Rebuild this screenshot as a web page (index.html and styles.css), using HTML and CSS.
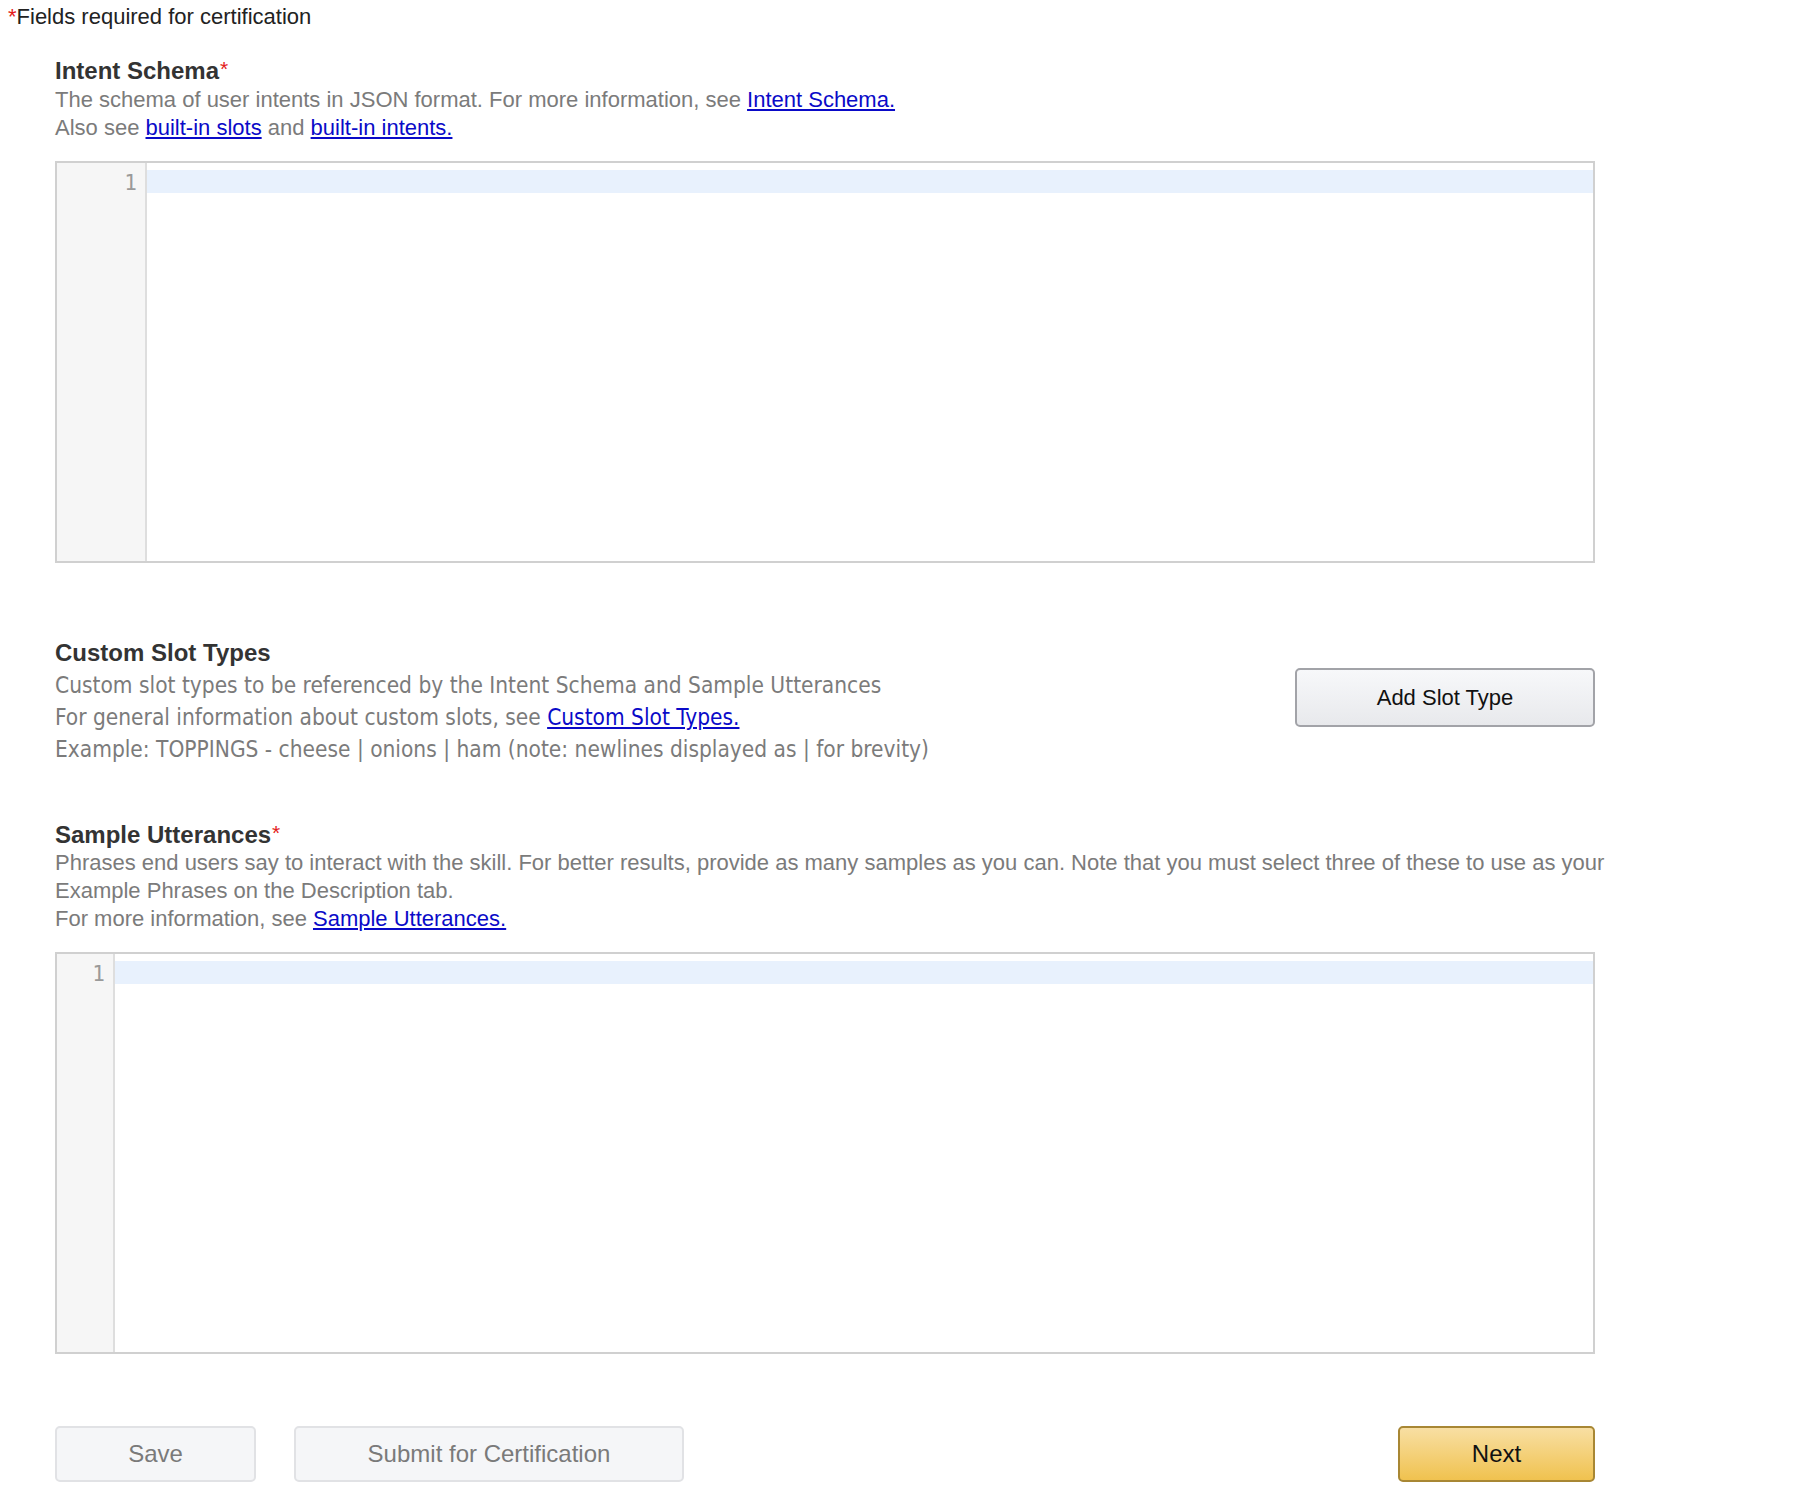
FILE: index.html
```html
<!DOCTYPE html>
<html lang="en">
<head>
<meta charset="utf-8">
<title>Interaction Model</title>
<link rel="stylesheet" href="styles.css">
</head>
<body>
<div class="page">
  <p class="required-note"><span class="req">*</span>Fields required for certification</p>
  <div class="form">
    <section class="field field-intent">
      <h2 class="field-title">Intent Schema<span class="req">*</span></h2>
      <p class="field-desc">The schema of user intents in JSON format. For more information, see <a href="#">Intent Schema.</a><br>Also see <a href="#">built-in slots</a> and <a href="#">built-in intents.</a></p>
      <div class="editor">
        <div class="gutter gutter-wide"><div class="line-no">1</div></div>
        <div class="code"><div class="active-line"></div></div>
      </div>
    </section>

    <section class="field field-slots">
      <h2 class="field-title">Custom Slot Types</h2>
      <div class="slots-row">
        <div class="slots-desc">
          <p class="slots-line">Custom slot types to be referenced by the Intent Schema and Sample Utterances</p>
          <p class="slots-line">For general information about custom slots, see <a href="#">Custom Slot Types.</a></p>
          <p class="slots-line">Example: TOPPINGS - cheese | onions | ham (note: newlines displayed as | for brevity)</p>
        </div>
        <button class="btn btn-add" type="button">Add Slot Type</button>
      </div>
    </section>

    <section class="field field-utterances">
      <h2 class="field-title">Sample Utterances<span class="req">*</span></h2>
      <p class="field-desc">Phrases end users say to interact with the skill. For better results, provide as many samples as you can. Note that you must select three of these to use as your Example Phrases on the Description tab.<br>For more information, see <a href="#">Sample Utterances.</a></p>
      <div class="editor">
        <div class="gutter gutter-narrow"><div class="line-no">1</div></div>
        <div class="code"><div class="active-line"></div></div>
      </div>
    </section>

    <div class="actions">
      <div class="actions-left">
        <button class="btn btn-muted btn-save" type="button">Save</button>
        <button class="btn btn-muted btn-submit" type="button">Submit for Certification</button>
      </div>
      <button class="btn btn-primary btn-next" type="button">Next</button>
    </div>
  </div>
</div>
</body>
</html>
```

FILE: styles.css
```css
html, body {
  margin: 0;
  padding: 0;
  background: #ffffff;
}

body {
  font-family: "Liberation Sans", Arial, sans-serif;
  color: #222222;
}

.page {
  width: 1816px;
}

.req {
  color: #e31b1b;
}

.required-note {
  margin: 0;
  padding: 3px 8px 0;
  font-size: 22px;
  line-height: 28px;
  color: #222222;
}

.form {
  padding-left: 55px;
  width: 1600px;
}

.field-intent {
  margin-top: 24px;
}

.field-title {
  margin: 0;
  font-size: 24px;
  line-height: 28px;
  font-weight: bold;
  color: #333333;
}

.field-title .req {
  font-weight: normal;
  font-size: 21px;
  vertical-align: 3px;
  margin-left: 1px;
}

.field-desc {
  margin: 0;
  font-size: 22px;
  line-height: 28px;
  color: #7b7b7b;
}

.field-intent .field-desc {
  margin-top: 1px;
}

a {
  color: #0a0ac8;
  text-decoration: underline;
}

.editor {
  margin-top: 19px;
  width: 1540px;
  height: 402px;
  box-sizing: border-box;
  border: 2px solid #d0d0d0;
  display: flex;
  background: #ffffff;
}

.gutter {
  background: #f6f6f6;
  border-right: 2px solid #dedede;
  flex: none;
  box-sizing: content-box;
}

.gutter-wide {
  width: 88px;
}

.gutter-narrow {
  width: 56px;
}

.line-no {
  margin-top: 7px;
  padding-top: 2px;
  padding-right: 8px;
  height: 21px;
  text-align: right;
  font-family: "DejaVu Sans Mono", monospace;
  font-size: 21px;
  line-height: 23px;
  color: #9a9a9a;
}

.code {
  flex: 1;
}

.active-line {
  margin-top: 7px;
  height: 23px;
  background: #e8f1fd;
}

.field-slots {
  margin-top: 76px;
}

.slots-row {
  width: 1540px;
  display: flex;
  justify-content: space-between;
  align-items: flex-start;
}

.slots-desc {
  padding-top: 2px;
}

.slots-line {
  margin: 0;
  font-family: "DejaVu Sans Condensed", "DejaVu Sans", sans-serif;
  font-stretch: condensed;
  font-size: 22.5px;
  line-height: 32px;
  color: #7b7b7b;
}

.btn {
  box-sizing: border-box;
  font-family: "Liberation Sans", Arial, sans-serif;
  font-size: 22px;
  border-radius: 5px;
  padding: 0;
  cursor: pointer;
}

.btn-add {
  margin-top: 1px;
  width: 300px;
  height: 59px;
  border: 2px solid #a2a3a8;
  background: linear-gradient(#f7f8fa, #e8e9ec);
  color: #111111;
}

.field-utterances {
  margin-top: 54px;
}

.actions {
  margin-top: 72px;
  width: 1540px;
  display: flex;
  justify-content: space-between;
  align-items: flex-start;
}

.actions-left {
  display: flex;
  gap: 38px;
}

.btn-muted {
  height: 56px;
  border: 2px solid #e1e2e5;
  background: #f5f6f8;
  color: #7a7a7a;
  font-size: 24px;
}

.btn-save {
  width: 201px;
}

.btn-submit {
  width: 390px;
}

.btn-primary {
  height: 56px;
  width: 197px;
  border: 2px solid #a88734;
  background: linear-gradient(#f8dfa3, #f0c24f);
  color: #111111;
  font-size: 24px;
}
```
